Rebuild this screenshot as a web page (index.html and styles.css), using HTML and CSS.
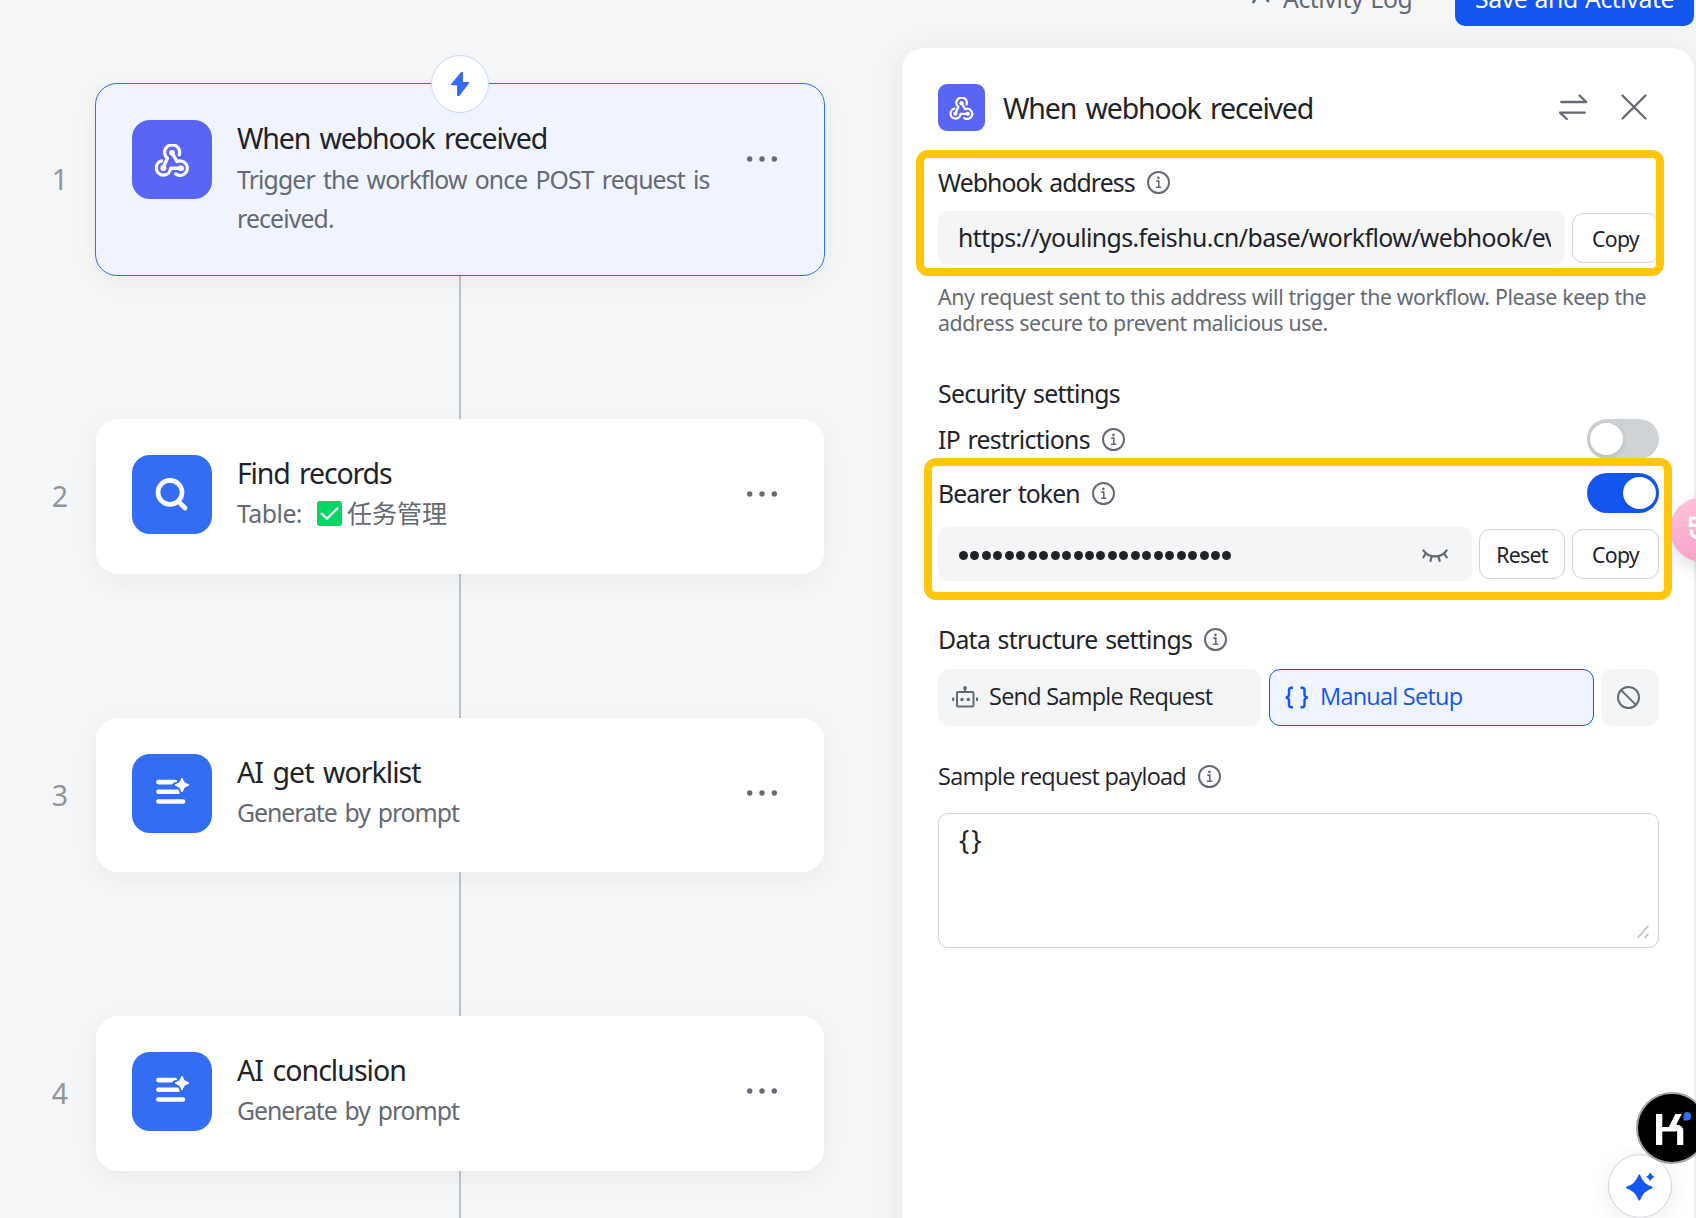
FILE: index.html
```html
<!DOCTYPE html>
<html lang="en">
<head>
<meta charset="utf-8">
<title>Workflow editor</title>
<link rel="stylesheet" href="styles.css">
</head>
<body>
<svg class="defs" width="0" height="0" aria-hidden="true">
  <symbol id="i-webhook" viewBox="0 0 34 32">
    <g fill="none" stroke="currentColor" stroke-width="3.2" stroke-linecap="round" stroke-linejoin="round">
      <path d="M24 10.500A7.300 7.300 0 1 0 12.600 13.800L8.600 22.600"/>
      <path d="M17 8.600l5 8.400a7 7 0 1 1-1.400 12"/>
      <path d="M7 16.300a7 7 0 1 0 8.700 7.200H25.600"/>
    </g>
    <g fill="currentColor"><circle cx="17" cy="8.600" r="2.900"/><circle cx="8.600" cy="23.200" r="2.900"/><circle cx="25.600" cy="23.400" r="2.900"/></g>
  </symbol>
  <symbol id="i-info" viewBox="0 0 23 23">
    <circle cx="11.5" cy="11.5" r="10.5" fill="none" stroke="currentColor" stroke-width="2"/>
    <circle cx="11.4" cy="6.9" r="1.3" fill="currentColor"/>
    <path d="M9.3 10.1h2.5v5.9M8.9 16.2h5.4" fill="none" stroke="currentColor" stroke-width="1.6"/>
  </symbol>
  <symbol id="i-more" viewBox="0 0 32 8">
    <g fill="currentColor"><circle cx="3.7" cy="4" r="2.7"/><circle cx="16" cy="4" r="2.7"/><circle cx="28.3" cy="4" r="2.7"/></g>
  </symbol>
  <symbol id="i-ai" viewBox="0 0 34 28">
    <path d="M2.4 5.1H19M2.4 14.7H22M2.4 24.5H27" fill="none" stroke="#fff" stroke-width="4.6" stroke-linecap="round"/>
    <path d="M26 .8l2.1 5.1 5.1 2.1-5.1 2.2L26 15.3l-2.1-5.1L18.7 8l5.2-2.1z" fill="#fff" stroke="#336df4" stroke-width="4.6" stroke-linejoin="round" paint-order="stroke"/>
    <path d="M26 1.200l2.300 4.500 4.700 2.300-4.700 2.400L26 14.900l-2.300-4.500L19 8l4.700-2.300z" fill="#fff" stroke="#fff" stroke-width="1" stroke-linejoin="round"/>
  </symbol>
</svg>

<div class="app">
  <main class="canvas">
    <section class="step">
      <span class="step-no">1</span>
      <article class="card card-active">
        <span class="badge"><svg width="20" height="26" viewBox="0 0 20 26"><path d="M11.200 1.800L1.400 13.600h6.300v10.400q.4 1.200 1.300.4L18.700 11.600h-6.300V1.800q-.4-.9-1.200 0z" fill="#336df4" stroke="#336df4" stroke-width="1.200" stroke-linejoin="round"/></svg></span>
        <span class="tile tile-violet"><svg width="36" height="33"><use href="#i-webhook"/></svg></span>
        <div class="card-text">
          <h3>When webhook received</h3>
          <p>Trigger the workflow once POST request is received.</p>
        </div>
        <svg class="more" width="32" height="8"><use href="#i-more"/></svg>
      </article>
    </section>
    <div class="link"></div>
    <section class="step">
      <span class="step-no">2</span>
      <article class="card">
        <span class="tile"><svg width="34" height="34" viewBox="0 0 34 34"><g fill="none" stroke="#fff" stroke-width="4.700" stroke-linecap="round"><circle cx="15" cy="14.400" r="12"/><path d="M24.800 25l5.200 5"/></g></svg></span>
        <div class="card-text">
          <h3>Find records</h3>
          <p class="table-ref">Table: <svg width="25" height="25" viewBox="0 0 25 25"><rect width="25" height="25" rx="3" fill="#00d664"/><path d="M4.800 12.800l5.200 4.900L20.300 7.500" fill="none" stroke="#fff" stroke-width="2.400" stroke-linecap="round" stroke-linejoin="round"/></svg><span class="cjk">任务管理</span></p>
        </div>
        <svg class="more" width="32" height="8"><use href="#i-more"/></svg>
      </article>
    </section>
    <div class="link link-long"></div>
    <section class="step">
      <span class="step-no">3</span>
      <article class="card card-short">
        <span class="tile tile-ai"><svg width="34" height="28"><use href="#i-ai"/></svg></span>
        <div class="card-text">
          <h3 class="loose">AI get worklist</h3>
          <p class="tight">Generate by prompt</p>
        </div>
        <svg class="more" width="32" height="8"><use href="#i-more"/></svg>
      </article>
    </section>
    <div class="link link-long"></div>
    <section class="step">
      <span class="step-no">4</span>
      <article class="card">
        <span class="tile tile-ai"><svg width="34" height="28"><use href="#i-ai"/></svg></span>
        <div class="card-text">
          <h3 class="loose">AI conclusion</h3>
          <p class="tight">Generate by prompt</p>
        </div>
        <svg class="more" width="32" height="8"><use href="#i-more"/></svg>
      </article>
    </section>
    <div class="link"></div>
  </main>

  <div class="side">
    <header class="topbar">
      <svg class="log-icon" width="18" height="12" viewBox="0 0 18 12"><path d="M1.500 11L4 6.500M14 7l2 3" fill="none" stroke="#646a73" stroke-width="2.800" stroke-linecap="round"/></svg>
      <span class="log">Activity Log</span>
      <span class="save">Save and Activate</span>
    </header>

    <aside class="panel">
      <div class="panel-head">
        <span class="tile tile-small tile-violet"><svg width="25" height="23"><use href="#i-webhook"/></svg></span>
        <h2>When webhook received</h2>
        <svg class="swap" width="30" height="28" viewBox="0 0 30 28" fill="none" stroke="#646a73" stroke-width="2.300" stroke-linecap="round" stroke-linejoin="round"><path d="M3.300 9h25l-6.800-6.500M26.700 19.700H2l6.800 6.300"/></svg>
        <svg class="close" width="26" height="26" viewBox="0 0 26 26" fill="none" stroke="#646a73" stroke-width="2.300" stroke-linecap="round"><path d="M1.500 1.500l23 23M24.500 1.500l-23 23"/></svg>
      </div>

      <div class="label">Webhook address <svg width="23" height="23"><use href="#i-info"/></svg></div>
      <div class="row">
        <div class="input"><span class="url">https://youlings.feishu.cn/base/workflow/webhook/event</span></div>
        <button class="btn btn-copy">Copy</button>
      </div>
      <p class="hint">Any request sent to this address will trigger the workflow. Please keep the address secure to prevent malicious use.</p>

      <div class="label label-wide label-security">Security settings</div>
      <div class="label label-wide switch-row">IP restrictions <svg width="23" height="23"><use href="#i-info"/></svg><span class="switch"></span></div>
      <div class="label switch-row switch-row-2">Bearer token <svg width="23" height="23"><use href="#i-info"/></svg><span class="switch switch-on"></span></div>
      <div class="row">
        <div class="input">
          <span class="mask"><i></i><i></i><i></i><i></i><i></i><i></i><i></i><i></i><i></i><i></i><i></i><i></i><i></i><i></i><i></i><i></i><i></i><i></i><i></i><i></i><i></i><i></i><i></i><i></i></span>
          <svg class="eye" width="26" height="14" viewBox="0 0 26 14" fill="none" stroke="#646a73" stroke-width="2.200" stroke-linecap="round"><path d="M1.300 1.300C7 9.500 19 9.500 24.700 1.300M3.800 4.300L1.400 8.300M22.200 4.300l2.500 4M9.500 7.500l-1 4.500M16.500 7.500l1.200 4.500"/></svg>
        </div>
        <button class="btn btn-reset">Reset</button>
        <button class="btn btn-copy">Copy</button>
      </div>

      <div class="label label-wide label-data">Data structure settings <svg width="23" height="23"><use href="#i-info"/></svg></div>
      <div class="modes">
        <div class="mode mode-send">
          <svg width="26" height="22" viewBox="0 0 26 22" fill="none" stroke="#646a73" stroke-width="2"><rect x="5" y="5" width="16.500" height="14.500" rx="1"/><path d="M1.200 10.500v3.500M25 10.500v3.500M13 1v4"/><circle cx="13" cy="1" r="1.900" fill="#646a73" stroke="none"/><circle cx="10" cy="12.500" r="1.700" fill="#646a73" stroke="none"/><circle cx="16.300" cy="12.500" r="1.700" fill="#646a73" stroke="none"/></svg>
          <span>Send Sample Request</span>
        </div>
        <div class="mode mode-manual">
          <svg width="24" height="22" viewBox="0 0 24 22" fill="none" stroke="#1456f0" stroke-width="2.400"><path d="M8 .7H6.500Q4 .7 4 3.200V7.500Q4 10.200.8 10.500q3.200.3 3.200 3v4.300q0 2.500 2.500 2.500H8M15.500.7H17q2.500 0 2.500 2.500v4.300q0 2.700 3.300 3-3.300.3-3.300 3v4.300q0 2.500-2.500 2.500h-1.500"/></svg>
          <span>Manual Setup</span>
        </div>
        <div class="mode mode-none">
          <svg width="23" height="23" viewBox="0 0 23 23" fill="none" stroke="#646a73" stroke-width="2"><circle cx="11.500" cy="11.500" r="10.500"/><path d="M4.100 4.100l14.800 14.800"/></svg>
        </div>
      </div>

      <div class="label label-payload">Sample request payload <svg width="23" height="23"><use href="#i-info"/></svg></div>
      <div class="payload"><span class="code">{}</span>
        <svg class="grip" width="12" height="14" viewBox="0 0 12 14" fill="none" stroke="#bbbfc4" stroke-width="1.600" stroke-linecap="round"><path d="M1 12.500L11 1M8 12.500l3-3.300"/></svg>
      </div>

      <div class="mark mark-address"></div>
      <div class="mark mark-token"></div>
    </aside>
  </div>

  <div class="bubble-pink"><svg width="26" height="34" viewBox="0 0 26 34" fill="none" stroke="#fff" stroke-width="3.200"><path d="M9.500 5H2.500v7.500h7M9.500 0v17M11 5h6v7.500h-6M3.500 17v2q0 5 6 5.500"/></svg></div>
  <div class="bubble-ai"><svg width="30" height="30" viewBox="0 0 30 30" fill="#1456f0" stroke="#1456f0" stroke-linejoin="round"><path stroke-width="2" d="M14.300 4.500Q17.500 13.800 26.500 16.500 17.500 19.300 14.300 28.500 11 19.300 2.200 16.500 11 13.800 14.300 4.500z"/><path stroke-width="1" d="M25.300 2q1 3 3.400 3.900-2.400.9-3.400 3.500-1-2.600-3.400-3.500 2.400-.9 3.400-3.900z"/></svg></div>
  <div class="bubble-k"><svg width="38" height="34" viewBox="0 0 38 34"><path fill="#fff" d="M3 2h6.300v13h6.500l6.500-13h6.500l-5.500 10.500q7 .5 7 7V33h-6.200V19.500q0-1-1.500 0h-13.300V33H3z"/><path fill="#3370ff" d="M34.500 0a4.300 4.300 0 0 1 0 8.500h-4V4.300A4.200 4.200 0 0 1 34.500 0z"/></svg></div>
</div>
</body>
</html>
```
FILE: styles.css
```css
* { box-sizing: border-box; }

body {
  margin: 0;
  width: 1696px;
  height: 1218px;
  overflow: hidden;
  background: #f5f6f8;
  color: #1f2329;
  font-family: "Noto Sans", "Noto Sans CJK SC", sans-serif;
}

h2, h3, p { margin: 0; font-weight: 400; }
svg { flex: none; display: block; overflow: visible; }
.defs { position: absolute; }

.app {
  position: relative;
  display: flex;
  width: 1696px;
  height: 1218px;
  overflow: hidden;
}

/* Workflow steps */
.canvas { width: 902px; flex: none; padding-top: 83px; }
.step { display: flex; align-items: center; }
.step-no {
  width: 96px;
  padding: 0 0 1px 24px;
  text-align: center;
  font-size: 28.5px;
  line-height: 36px;
  color: #8f959e;
}
.card {
  position: relative;
  display: flex;
  width: 728px;
  height: 155px;
  padding: 36px 46px 0 36px;
  border-radius: 22px;
  background: #fff;
  box-shadow: 0 6px 24px rgba(31, 35, 41, .05);
}
.card-short { height: 154px; }
.card-active {
  width: 730px;
  height: 193px;
  margin-left: -1px;
  border: 1px solid #336df4;
  background: #f0f4ff;
}
.tile {
  flex: none;
  display: flex;
  align-items: center;
  justify-content: center;
  width: 80px;
  height: 79px;
  border-radius: 18px;
  background: #336df4;
  color: #fff;
}
.tile-violet { background: #5b65f5; padding-top: 1px; }
.tile-ai { padding: 0 0 5px 2px; }
.tile-small { width: 47px; height: 47px; border-radius: 9px; }
.card-text { flex: 1; padding-left: 25px; margin-top: -2px; }
.card-text h3, .panel-head h2 {
  font-size: 28.5px;
  line-height: 41px;
  letter-spacing: -.041em;
  word-spacing: .11em;
}
.card-text .loose { letter-spacing: -.034em; }
.card-text p {
  font-size: 24.8px;
  line-height: 39px;
  letter-spacing: -.035em;
  word-spacing: .1em;
  color: #646a73;
}
.card-active p { margin-top: 1px; }
.card-text .tight { letter-spacing: -.042em; }
.card-text .table-ref { display: flex; align-items: center; letter-spacing: -.02em; }
.table-ref svg { margin: 0 5px 0 15px; }
.cjk { font-size: 25px; letter-spacing: 0; }
.more { margin-top: 35px; color: #646a73; }
.badge {
  position: absolute;
  left: 335px;
  top: -29px;
  display: flex;
  align-items: center;
  justify-content: center;
  width: 58px;
  height: 58px;
  border: 1px solid #c8d8ff;
  border-radius: 50%;
  background: #fff;
}
.link { width: 2px; height: 143px; margin-left: 459px; background: #bfc2c9; }
.link-long { height: 144px; }

/* Top bar, cut by the window edge */
.side { width: 792px; flex: none; }
.topbar {
  display: flex;
  align-items: flex-end;
  justify-content: flex-end;
  height: 26px;
  margin-bottom: 22px;
  font-size: 24.8px;
  line-height: 36px;
  letter-spacing: -.018em;
  word-spacing: .05em;
}
.log-icon { margin: 0 13px 23px 0; }
.log { width: 172px; margin-bottom: 10px; color: #646a73; }
.save {
  width: 239px;
  height: 56px;
  padding-top: 10px;
  border-radius: 0 0 10px 10px;
  background: #1456f0;
  color: #fff;
  text-align: center;
}

/* Settings panel */
.panel {
  position: relative;
  height: 1200px;
  padding: 36px 35px 0 36px;
  border-radius: 22px;
  background: #fff;
  box-shadow: 0 4px 32px rgba(31, 35, 41, .08);
}
.panel-head { display: flex; align-items: center; margin-bottom: 36px; }
.panel-head h2 { flex: 1; padding: 2px 0 0 18px; }
.panel-head .swap { margin-bottom: 1px; }
.panel-head .close { margin: 0 12px 2px 33px; }
.label {
  display: flex;
  align-items: center;
  gap: 12px;
  height: 30px;
  font-size: 24.8px;
  letter-spacing: -.037em;
  word-spacing: .07em;
}
.label svg { color: #646a73; }
.label-wide { letter-spacing: -.028em; }
.row { display: flex; align-items: center; gap: 7px; margin-top: 14px; }
.input {
  flex: 1;
  min-width: 0;
  display: flex;
  align-items: center;
  height: 54px;
  padding: 0 14px 0 20px;
  border-radius: 10px;
  background: #f4f5f7;
}
.url {
  overflow: hidden;
  padding-bottom: 2px;
  white-space: nowrap;
  font-size: 24.8px;
  letter-spacing: -.023em;
}
.btn {
  height: 50px;
  padding: 1px 0 0;
  border: 1px solid #d0d3d6;
  border-radius: 11px;
  background: #fff;
  color: #1f2329;
  font: 21.3px "Noto Sans", sans-serif;
  letter-spacing: -.035em;
}
.btn-copy { width: 87px; }
.btn-reset { width: 86px; }
.hint {
  margin-top: 19px;
  width: 721px;
  font-size: 21.3px;
  line-height: 26px;
  letter-spacing: -.02em;
  word-spacing: .01em;
  color: #646a73;
}
.label-security { margin-top: 42px; }
.switch-row { height: 40px; margin-top: 11px; }
.switch-row-2 { margin-top: 14px; }
.switch {
  width: 72px;
  height: 40px;
  margin-left: auto;
  padding: 4px 3px;
  border-radius: 20px;
  background: #d0d3d6;
}
.switch::before {
  content: "";
  display: block;
  width: 33px;
  height: 32px;
  border-radius: 50%;
  background: #fff;
  box-shadow: 0 2px 6px rgba(31, 35, 41, .15);
}
.switch-on { background: #1456f0; }
.switch-on::before { margin-left: 33px; }
.mask { display: flex; gap: 2.46px; padding-left: 1px; margin-top: 3px; }
.mask i { width: 9px; height: 9px; border-radius: 50%; background: #1f2329; }
.eye { margin: 3px 10px 0 auto; }
.label-data { margin-top: 43px; }
.modes { display: flex; gap: 7px; margin-top: 15px; }
.mode {
  display: flex;
  align-items: center;
  height: 57px;
  border-radius: 11px;
  background: #f4f5f7;
}
.mode span { padding-bottom: 3px; }
.mode, .label-payload {
  font-family: "Open Sans", sans-serif;
  font-size: 23.5px;
  letter-spacing: -.032em;
}
.mode-send { width: 323px; padding-left: 14px; gap: 11px; margin-right: 1px; }
.mode-manual {
  width: 325px;
  padding-left: 15px;
  gap: 11px;
  border: 1px solid #1456f0;
  background: #f0f4ff;
  color: #1456f0;
}
.mode-none { flex: 1; justify-content: center; padding-right: 3px; }
.label-payload { margin-top: 35px; word-spacing: 0; }
.payload {
  display: flex;
  justify-content: space-between;
  height: 135px;
  margin-top: 22px;
  padding: 8px 9px 8px 20px;
  border: 1px solid #d0d3d6;
  border-radius: 10px;
  font-size: 27px;
  line-height: 36px;
}
.code { letter-spacing: 2px; }
.grip { align-self: flex-end; }

/* Highlight frames over the form */
.mark {
  position: absolute;
  width: 748px;
  border: 8px solid #ffc60a;
  border-radius: 12px;
  z-index: 2;
}
.mark-address { left: 14px; top: 102px; height: 126px; }
.mark-token { left: 22px; top: 410px; height: 142px; }

/* Floating helpers */
.bubble-pink, .bubble-ai, .bubble-k {
  position: absolute;
  display: flex;
  align-items: center;
  justify-content: center;
  border-radius: 50%;
}
.bubble-pink {
  left: 1670px;
  top: 497px;
  width: 65px;
  height: 65px;
  padding-right: 4px;
  background: linear-gradient(#ffc2dc, #f7a3c8);
  box-shadow: 0 6px 16px rgba(31, 35, 41, .14);
}
.bubble-ai {
  left: 1608px;
  top: 1154px;
  width: 64px;
  height: 64px;
  border: 1px solid #d0d3d6;
  background: #fff;
  box-shadow: 0 4px 24px rgba(31, 35, 41, .08);
}
.bubble-k {
  left: 1636px;
  top: 1092px;
  width: 72px;
  height: 72px;
  padding-top: 2px;
  border: 2px solid #a5a5a5;
  background: #000;
}
```
